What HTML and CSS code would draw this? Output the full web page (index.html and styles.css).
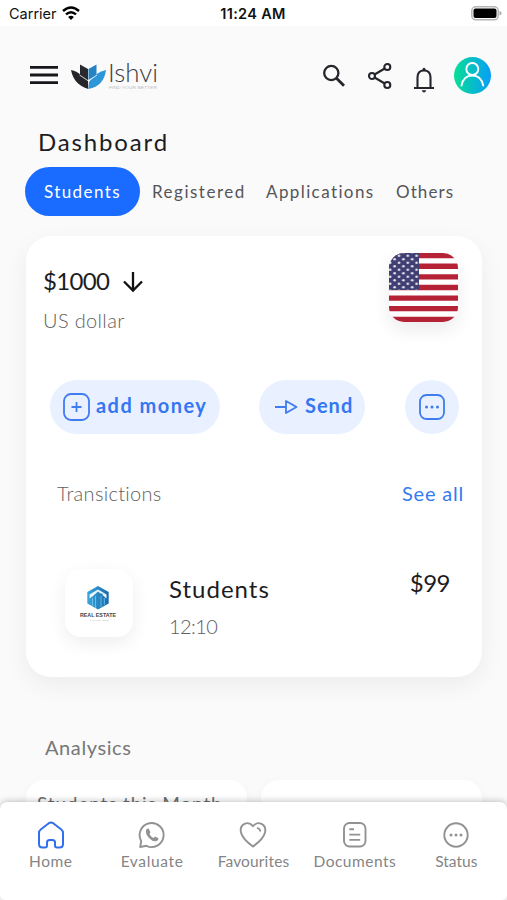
FILE: index.html
```html
<!DOCTYPE html>
<html lang="en">
<head>
<meta charset="utf-8">
<title>Ishvi</title>
<link rel="stylesheet" href="styles.css">
</head>
<body>
<div class="screen">
  <div class="statusbar">
    <span class="carrier">Carrier</span>
    <svg class="wifi" width="18" height="14" viewBox="0 0 18 14" fill="none" stroke="#000" stroke-width="2.5"><path d="M1 5Q9-2 17 5M4 8.4Q9 4 14 8.4"/><path d="M9 14L6.1 11Q9 8.6 11.9 11Z" fill="#000" stroke="none"/></svg>
    <span class="clock">11:24 AM</span>
    <svg class="battery" width="31" height="15" viewBox="0 0 31 15"><rect x=".8" y=".8" width="26.4" height="13" rx="4" fill="#fff" stroke="#b5b5b5" stroke-width="1.5"/><rect x="2.5" y="2.5" width="23" height="9.6" rx="2"/><path d="M28.5 5Q30.5 5.5 30.5 7.3T28.5 9.6Z" fill="#aaa"/></svg>
  </div>
  <header class="header">
    <svg class="menu" width="28" height="20" viewBox="0 0 28 20" stroke="#16171b" stroke-width="2.8"><path d="M0 2.3H28M0 10H28M0 17.7H28"/></svg>
    <svg class="logo" width="90" height="32" viewBox="0 0 90 32">
      <path d="M0 8Q6 9 11 14L17 19 17.3 27Q3 23 0 8Z" fill="#25262b"/><path d="M9 2.5L17 7V19L9 14Z" fill="#292a2f"/>
      <path d="M17.5 7L25.5 2.5V13L17.5 18Z" fill="#2583c1"/><path d="M35 8Q33 24 17.5 27L18 20Q25 10 35 8Z" fill="#2d96d8"/>
      <path d="M8.5 13L17.5 19 26 13" fill="none" stroke="#fafafa" stroke-width=".8"/>
      <text class="logo-name" x="37" y="20" textLength="50" lengthAdjust="spacingAndGlyphs">Ishvi</text>
      <text class="logo-tag" x="38" y="27" textLength="48" lengthAdjust="spacingAndGlyphs">FIND YOUR BETTER</text>
    </svg>
    <svg class="search" width="24" height="24" viewBox="0 0 24 24" fill="none" stroke="#24262b" stroke-width="2.3"><circle cx="9.3" cy="9" r="7.1"/><path d="M14.5 14.2L22 21.7" stroke-width="2.8"/></svg>
    <svg class="share" width="26" height="28" viewBox="0 0 26 28" fill="none" stroke="#24262b" stroke-width="2.1"><circle cx="5" cy="14" r="3"/><circle cx="20.3" cy="5" r="3"/><circle cx="20.3" cy="23" r="3"/><path d="M7.6 12.5L17.7 6.5M7.6 15.5L17.7 21.5"/></svg>
    <svg class="bell" width="22" height="26" viewBox="0 0 22 26" fill="none" stroke="#24262b" stroke-width="2.1"><path d="M4.5 21V10.5Q4.5 3.5 11 3.5T17.5 10.5V21M1 21H21"/><circle cx="11" cy="2.2" r="1.5" fill="#24262b" stroke="none"/><path d="M8.7 23.2H13.3Q12.5 25.6 11 25.6T8.7 23.2Z" fill="#24262b" stroke="none"/></svg>
    <span class="avatar"><svg width="37" height="37" viewBox="0 0 37 37" fill="none" stroke="#fff" stroke-width="1.9" stroke-linecap="round"><circle cx="18.3" cy="12" r="6"/><path d="M7.5 28.5Q9.5 18.5 18.3 18.5T29.2 28.5"/></svg></span>
  </header>
  <h1 class="title">Dashboard</h1>
  <nav class="tabs">
    <a class="tab tab-active">Students</a>
    <a class="tab tab-registered">Registered</a>
    <a class="tab tab-applications">Applications</a>
    <a class="tab tab-others">Others</a>
  </nav>
  <section class="card">
    <div class="balance">
      <div class="balance-info">
        <div class="amount"><span>$1000</span><svg width="22" height="22" viewBox="0 0 22 22" fill="none" stroke="#111" stroke-width="2.3"><path d="M11 1V19.5M2 10.5L11 19.5 20 10.5"/></svg></div>
        <div class="currency">US dollar</div>
      </div>
      <svg class="flag" width="69" height="69" viewBox="0 0 69 69">
        <defs><pattern id="stars" width="8.8" height="7" patternUnits="userSpaceOnUse" x="-1" y="1"><rect width="8.8" height="7" fill="#3f3f73"/><circle cx="2.2" cy="1.8" r="1.3" fill="#e4e3ee"/><circle cx="6.6" cy="5.3" r="1.3" fill="#e4e3ee"/></pattern></defs>
        <path fill="#fff" d="M0 0H69V69H0Z"/><path d="M0 2.65H69M0 13.25H69M0 23.9H69M0 34.5H69M0 45.1H69M0 55.7H69M0 66.4H69" stroke="#b52236" stroke-width="5.3"/><path fill="url(#stars)" d="M0 0H30V37H0Z"/>
      </svg>
    </div>
    <div class="actions">
      <button class="pill pill-add"><svg width="27" height="28" viewBox="0 0 27 28" fill="none" stroke="#3f7cef" stroke-width="1.8"><rect x="1" y="1" width="25" height="26" rx="7"/><path d="M8.5 14H18.5M13.5 9V19"/></svg><span>add money</span></button>
      <button class="pill pill-send"><svg width="24" height="16" viewBox="0 0 24 16" fill="none" stroke="#3f7cef" stroke-width="1.8" stroke-linejoin="round"><path d="M1 8H12M12 2V14L22.5 8Z"/></svg><span>Send</span></button>
      <button class="pill pill-more"><svg width="26" height="26" viewBox="0 0 26 26" fill="none" stroke="#3f7cef" stroke-width="1.8"><rect x="1" y="1" width="24" height="24" rx="6.5"/><g fill="#3f7cef" stroke="none"><circle cx="7.5" cy="13" r="1.5"/><circle cx="13" cy="13" r="1.5"/><circle cx="18.5" cy="13" r="1.5"/></g></svg></button>
    </div>
    <div class="list-head"><span class="list-title">Transictions</span><a class="see-all">See all</a></div>
    <div class="transaction">
      <div class="thumb"><svg width="68" height="68" viewBox="0 0 68 68">
        <defs><linearGradient id="estate" x2="1"><stop stop-color="#3ba5dc"/><stop offset="1" stop-color="#176aac"/></linearGradient></defs>
        <path d="M33 17L43.7 23V34.5L33 40.5 22.3 34.5V23Z" fill="url(#estate)"/><path d="M24.5 29.5V25.5L33 20.5 41.5 25.5V29.5L37.5 26V24.5H35.5L33 22.5 28 27Z" fill="#e9f7fd"/><path d="M27.5 29V37M30.5 27V39M36 27V38M39.3 29V36" stroke="#79c9eb" stroke-width=".8"/>
        <text class="estate-name" x="15" y="47.5" textLength="36" lengthAdjust="spacingAndGlyphs">REAL ESTATE</text><text class="estate-tag" x="25" y="52" textLength="18">TAGLINE HERE</text>
      </svg></div>
      <div class="transaction-info"><div class="transaction-name">Students</div><div class="transaction-time">12:10</div></div>
      <div class="transaction-price">$99</div>
    </div>
  </section>
  <h2 class="analytics">Analysics</h2>
  <div class="stats"><div class="stat">Students this Month</div><div class="stat"></div></div>
  <nav class="bottom">
    <a class="item active"><svg width="28" height="28" viewBox="0 0 28 28" fill="none" stroke="#316fec" stroke-width="2" stroke-linejoin="round"><path d="M2 12Q2 9.7 4 8.2L11.8 2.2Q14 .7 16.2 2.2L24 8.2Q26 9.7 26 12V23Q26 26.5 22.5 26.5H20Q18 26.5 18 24.5V21.5Q18 19 15.5 19H12.5Q10 19 10 21.5V24.5Q10 26.5 8 26.5H5.5Q2 26.5 2 23Z"/></svg><span class="home">Home</span></a>
    <a class="item"><svg width="28" height="28" viewBox="0 0 28 28" fill="none" stroke="#929292" stroke-width="1.9"><path d="M2.2 26L3.2 20A12 12 0 1 1 8.3 24.8Z" stroke-linejoin="round"/><path d="M8.3 8.6Q9.6 7.2 10.8 7.8L12.4 11.2Q12.1 12.3 11.4 13Q13 16 15.7 17L17.2 15.6 20.5 17.2Q20.7 19.1 18.3 20.2Q14.8 20.8 11 16.9Q6.8 12.5 8.3 8.6Z" fill="#929292" stroke="none"/></svg><span class="evaluate">Evaluate</span></a>
    <a class="item"><svg width="28" height="28" viewBox="0 0 28 28" fill="none" stroke="#929292" stroke-width="1.9" stroke-linecap="round" stroke-linejoin="round"><path d="M14 5.2Q10.5 1 6 2.6Q.5 5 2 11.5Q3.5 18 14 25.5Q24.5 18 26 11.5Q27.5 5 22 2.6Q17.5 1 14 5.2ZM18.7 7.2Q20.8 7.7 21.2 9.7"/></svg><span class="favourites">Favourites</span></a>
    <a class="item"><svg width="28" height="28" viewBox="0 0 28 28" fill="none" stroke="#929292" stroke-width="1.9"><rect x="3" y="2" width="21.5" height="23.5" rx="5.5"/><path d="M8.3 8.3H13M8.3 13.6H19.2M8.3 18.9H19.2"/></svg><span class="documents">Documents</span></a>
    <a class="item"><svg width="28" height="28" viewBox="0 0 28 28" fill="none" stroke="#929292" stroke-width="1.9"><circle cx="14" cy="14" r="11.7"/><g fill="#929292" stroke="none"><circle cx="9" cy="14" r="1.5"/><circle cx="14" cy="14" r="1.5"/><circle cx="19" cy="14" r="1.5"/></g></svg><span>Status</span></a>
  </nav>
</div>
</body>
</html>
```
FILE: styles.css
```css
* { box-sizing: border-box; }
body { margin: 0; background: #fafafa; font-family: Lato, "Open Sans", sans-serif; color: #1d1d1f; font-variant-ligatures: none; }
svg { display: block; flex: none; }
.screen { width: 507px; height: 900px; overflow: hidden; display: flex; flex-direction: column; white-space: nowrap; background: #fafafa; }
.screen > * { flex: none; }
.statusbar { height: 26px; background: #fff; display: flex; align-items: center; padding: 0 5px 0 9px; font: 14.5px Inter, sans-serif; color: #111; }
.carrier { width: 53px; }
.clock { width: 68px; margin-left: 139px; font-weight: 600; text-align: center; letter-spacing: .3px; }
.battery { margin-left: auto; }
.header { height: 98px; padding: 29px 16px 0 30px; display: flex; align-items: flex-start; }
.menu { margin-top: 10px; }
.logo { margin: 7px 0 0 13px; overflow: visible; }
.logo-name { font: 300 25px Lato, sans-serif; fill: #404047; }
.logo-tag { font: 4px "Liberation Sans", sans-serif; fill: #bbb; }
.search { margin: 9px 0 0 161px; }
.share { margin: 7px 0 0 21px; }
.bell { margin: 12px 0 0 20px; }
.avatar { width: 37px; height: 37px; margin: 2px 0 0 auto; border-radius: 50%; background: linear-gradient(90deg, #08df96, #079df7); }
.title { margin: 0; padding: 4px 0 0 38px; height: 43px; font-size: 24px; font-weight: 400; line-height: 27px; letter-spacing: 1.85px; }
.tabs { display: flex; align-items: center; height: 49px; padding-left: 25px; font-size: 17px; color: #555558; }
.tab-active { width: 115px; height: 49px; border-radius: 25px; background: #196cff; color: #fff; display: flex; align-items: center; padding-left: 19px; margin-right: 12px; letter-spacing: 1.4px; }
.tab-registered { width: 114px; letter-spacing: 1.5px; }
.tab-applications { width: 130px; letter-spacing: 1.4px; }
.tab-others { letter-spacing: 1.1px; }
.card { margin: 20px 25px 0 26px; height: 441px; border-radius: 25px; background: #fff; box-shadow: 0 8px 24px rgba(0,0,0,.06); }
.balance { height: 144px; padding: 17px 24px 0 17px; display: flex; justify-content: space-between; }
.amount { display: flex; align-items: center; height: 28px; margin-top: 13px; gap: 13px; font-size: 24px; letter-spacing: -.7px; }
.amount svg { margin-top: 3px; }
.currency { font-size: 20px; line-height: 26px; margin-top: 13px; color: #606060; font-weight: 300; letter-spacing: .35px; }
.flag { border-radius: 15px; box-shadow: 0 8px 18px rgba(0,0,0,.08); }
.actions { height: 54px; display: flex; padding-left: 24px; }
.pill { border: 0; padding: 0; height: 54px; border-radius: 27px; background: #e9f0ff; display: flex; align-items: center; font: 700 20px Lato, sans-serif; color: #3577f2; letter-spacing: 1px; }
.pill span { padding-bottom: 4px; }
.pill-add { width: 170px; padding-left: 13px; gap: 6px; letter-spacing: 1.45px; }
.pill-send { width: 106px; padding-left: 15px; gap: 7px; margin-left: 39px; }
.pill-more { width: 54px; margin-left: 40px; justify-content: center; }
.list-head { display: flex; justify-content: space-between; padding: 46px 18px 0 31px; font-size: 20px; line-height: 26px; color: #606060; height: 135px; font-weight: 300; }
.list-title { letter-spacing: .3px; }
.see-all { color: #347bf2; font-weight: 400; letter-spacing: .8px; }
.transaction { display: flex; padding: 0 32px 0 39px; }
.thumb { width: 68px; height: 68px; border-radius: 16px; box-shadow: 0 6px 18px rgba(0,0,0,.07); }
.estate-name { font: 700 5px "Liberation Sans", sans-serif; fill: #45464a; }
.estate-tag { font: 2px "Liberation Sans", sans-serif; fill: #aaa; }
.transaction-info { margin: 5px 0 0 36px; }
.transaction-name { font-size: 24px; line-height: 30px; letter-spacing: 1px; }
.transaction-time { font-size: 20px; line-height: 26px; margin-top: 9px; color: #606060; font-weight: 300; letter-spacing: -.6px; }
.transaction-price { margin: -1px 0 0 auto; font-size: 24px; line-height: 30px; letter-spacing: -.5px; }
.analytics { margin: 0; height: 103px; padding: 57px 0 0 45px; color: #777; font-size: 20px; font-weight: 400; line-height: 26px; letter-spacing: .6px; }
.stats { height: 22px; padding: 0 25px 0 26px; display: grid; grid-template-columns: 221px 1fr; gap: 14px; }
.stat { height: 90px; background: #fff; border-radius: 18px; padding: 11px 11px; font-size: 19px; line-height: 25px; color: #6d6d6d; letter-spacing: .85px; box-shadow: 0 4px 14px rgba(0,0,0,.035); }
.bottom { position: relative; height: 98px; padding-top: 19px; background: #fff; border-radius: 7px 7px 5px 5px; display: grid; grid-template-columns: repeat(5,1fr); box-shadow: 0 -1px 6px rgba(0,0,0,.23); }
.item { display: flex; flex-direction: column; align-items: center; gap: 2px; color: #858585; font-size: 15.5px; line-height: 20px; }
.home, .documents { letter-spacing: .5px; }
.evaluate { letter-spacing: .65px; }
.favourites { letter-spacing: .15px; }
```
